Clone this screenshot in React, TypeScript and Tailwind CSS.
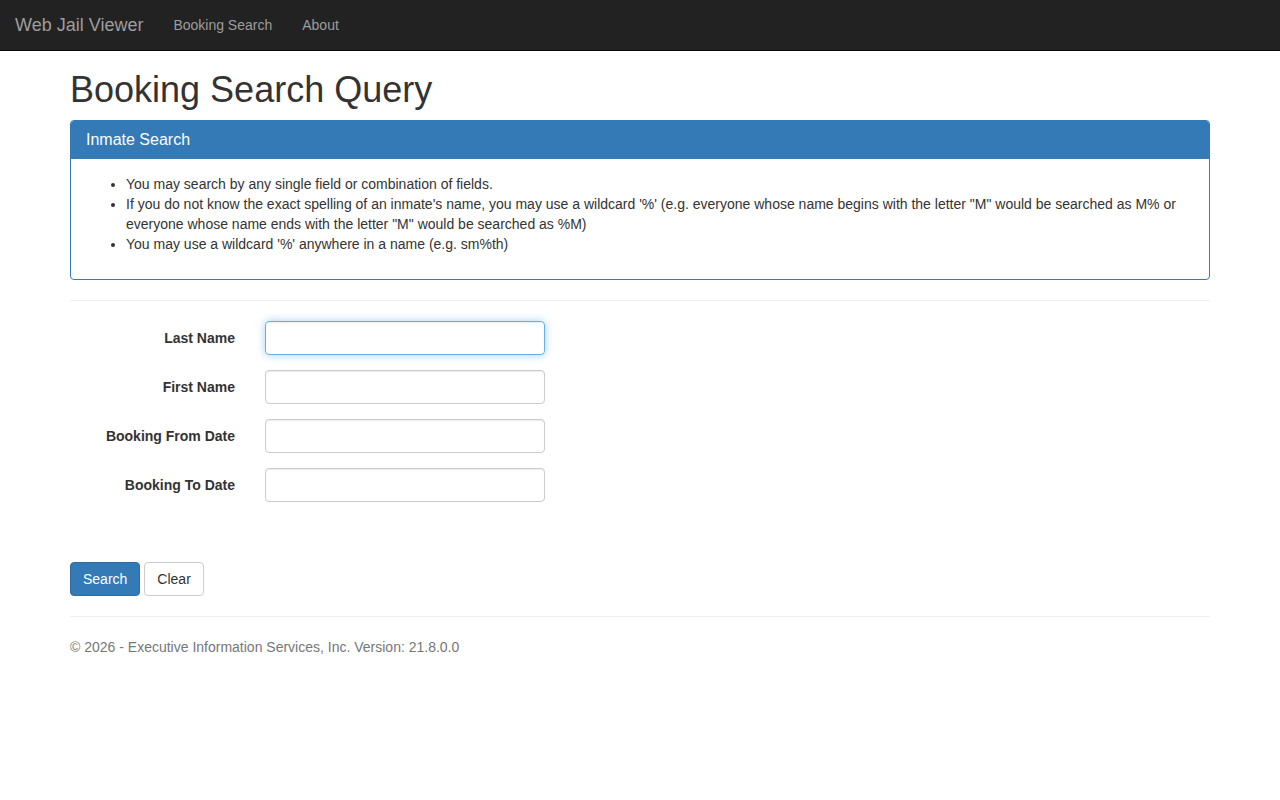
import React from 'react';

const FONT = { fontFamily: '"Liberation Sans", Arial, Helvetica, sans-serif' };

const fields = ['Last Name', 'First Name', 'Booking From Date', 'Booking To Date'];

export default function App() {
  return (
    <div className="min-h-[800px] bg-white text-[14px] leading-[20px] text-[#333]" style={FONT}>
      <nav className="h-[51px] border-b border-[#080808] bg-[#222]">
        <div className="flex h-[50px] items-center">
          <a className="px-[15px] text-[18px] leading-[20px] text-[#9d9d9d]" href="#">
            Web Jail Viewer
          </a>
          <a className="px-[15px] text-[#9d9d9d]" href="#">
            Booking Search
          </a>
          <a className="px-[15px] text-[#9d9d9d]" href="#">
            About
          </a>
        </div>
      </nav>

      <div className="mx-auto w-[1170px] px-[15px]">
        <h1 className="mb-[10px] mt-[19px] text-[36px] font-normal leading-[39.6px] text-[#333]">
          Booking Search Query
        </h1>

        <div className="mb-[20px] rounded-[4px] border border-[#337ab7]">
          <div className="rounded-t-[3px] border-b border-[#337ab7] bg-[#337ab7] px-[15px] py-[10px] text-[16px] leading-[17.6px] text-white">
            Inmate Search
          </div>
          <div className="p-[15px]">
            <ul className="mb-[10px] list-disc pl-[40px]">
              <li>You may search by any single field or combination of fields.</li>
              <li>
                If you do not know the exact spelling of an inmate's name, you may use a wildcard '%' (e.g. everyone
                whose name begins with the letter "M" would be searched as M% or everyone whose name ends with the
                letter "M" would be searched as %M)
              </li>
              <li>You may use a wildcard '%' anywhere in a name (e.g. sm%th)</li>
            </ul>
          </div>
        </div>

        <hr className="my-[20px] border-t border-[#eee]" />

        <div className="flex flex-col gap-[15px]">
          {fields.map((label, index) => (
            <div key={label} className="flex items-center">
              <label className="w-[165px] text-right font-bold">{label}</label>
              <input
                type="text"
                className={
                  index === 0
                    ? 'ml-[30px] h-[34px] w-[280px] rounded-[4px] border border-[#66afe9] px-[12px] shadow-[inset_0_1px_1px_rgba(0,0,0,0.075),0_0_8px_rgba(102,175,233,0.6)] outline-none'
                    : 'ml-[30px] h-[34px] w-[280px] rounded-[4px] border border-[#ccc] px-[12px] shadow-[inset_0_1px_1px_rgba(0,0,0,0.075)] outline-none'
                }
              />
            </div>
          ))}
        </div>

        <div className="mt-[60px] flex gap-[4px]">
          <button className="h-[34px] rounded-[4px] border border-[#2e6da4] bg-[#337ab7] px-[12px] text-white">
            Search
          </button>
          <button className="h-[34px] rounded-[4px] border border-[#ccc] bg-white px-[12px] text-[#333]">
            Clear
          </button>
        </div>

        <hr className="my-[20px] border-t border-[#eee]" />

        <footer>
          <p className="text-[#777]">© 2026 - Executive Information Services, Inc. Version: 21.8.0.0</p>
        </footer>
      </div>
    </div>
  );
}
